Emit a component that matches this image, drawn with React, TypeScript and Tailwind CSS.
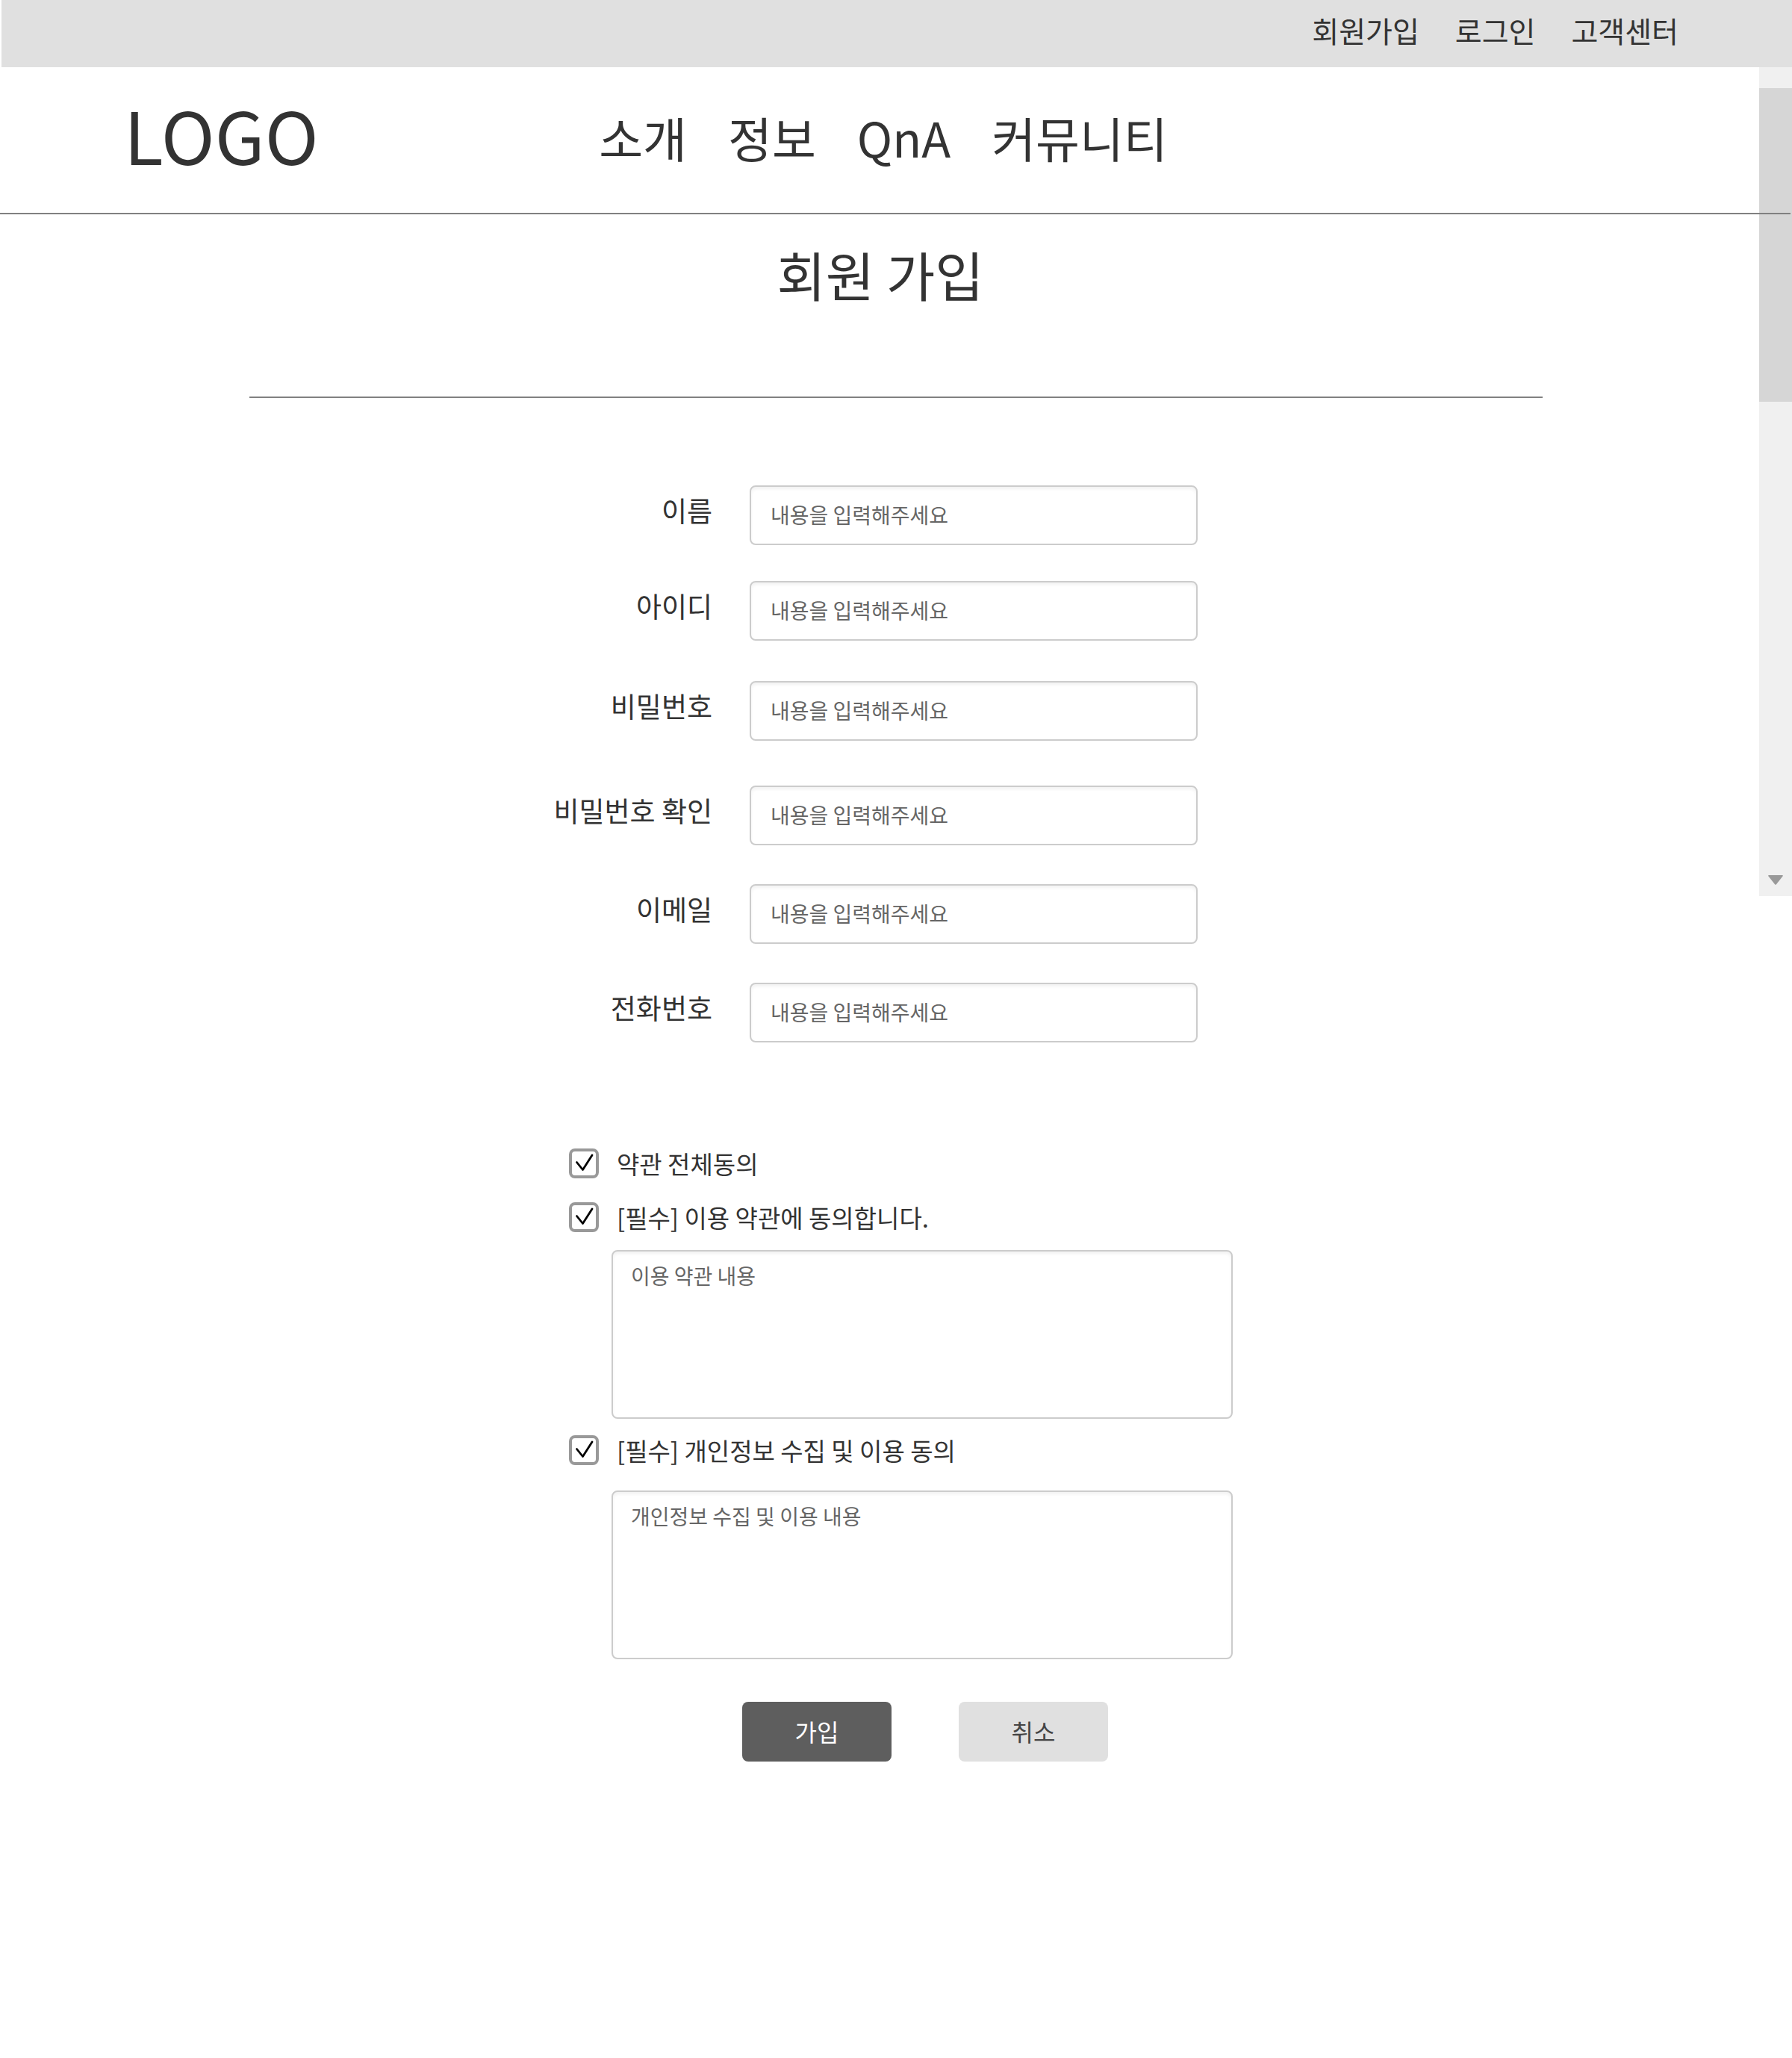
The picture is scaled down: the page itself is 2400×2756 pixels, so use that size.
import React from "react";

const topLinks = ["회원가입", "로그인", "고객센터"];
const navLinks = ["소개", "정보", "QnA", "커뮤니티"];

const fields = [
  { id: "name", label: "이름", type: "text", space: "" },
  { id: "user-id", label: "아이디", type: "text", space: "mt-12" },
  { id: "password", label: "비밀번호", type: "password", space: "mt-[54px]" },
  { id: "password-confirm", label: "비밀번호 확인", type: "password", space: "mt-[60px]" },
  { id: "email", label: "이메일", type: "email", space: "mt-[52px]" },
  { id: "phone", label: "전화번호", type: "tel", space: "mt-[52px]" },
];

const boxClass =
  "rounded-lg border-2 border-[#cccccc] bg-white text-[28px] leading-10 text-[#666666] shadow-[inset_0_3px_4px_#f2f2f2] outline-none placeholder:text-[#666666] placeholder:opacity-100";

function Field({ id, label, type, space }: { id: string; label: string; type: string; space: string }) {
  return (
    <div className={`flex items-center ${space}`}>
      <label htmlFor={id} className="w-[226px] shrink-0 pb-[14px] text-right text-[37px] leading-[52px] whitespace-nowrap">
        {label}
      </label>
      <input
        id={id}
        type={type}
        placeholder="내용을 입력해주세요"
        className={`ml-[50px] h-20 w-full max-w-[600px] px-[26px] pb-[3px] ${boxClass}`}
      />
    </div>
  );
}

function Check({ id, label }: { id: string; label: string }) {
  return (
    <div className="flex items-center gap-6 pl-[34px]">
      <span className="grid size-10 shrink-0">
        <input
          id={id}
          type="checkbox"
          defaultChecked
          className="peer col-start-1 row-start-1 size-10 appearance-none rounded-lg border-4 border-[#999999] bg-white"
        />
        <svg
          viewBox="0 0 40 40"
          fill="none"
          stroke="#000000"
          strokeWidth="2.8"
          strokeLinecap="round"
          strokeLinejoin="round"
          aria-hidden="true"
          className="pointer-events-none invisible col-start-1 row-start-1 size-10 peer-checked:visible"
        >
          <path d="M10.5 18.5 L18.5 28.5 L31 9" />
        </svg>
      </span>
      <label htmlFor={id} className="text-[33px] leading-10">
        {label}
      </label>
    </div>
  );
}

function Terms({ label, text }: { label: string; text: string }) {
  return (
    <div className="pl-[91px]">
      <textarea
        aria-label={label}
        readOnly
        defaultValue={text}
        className={`block h-[226px] w-full max-w-[832px] resize-none px-6 pt-3 ${boxClass}`}
      />
    </div>
  );
}

function Scrollbar() {
  return (
    <div className="absolute top-[90px] right-0 flex h-[1110px] w-11 flex-col bg-[#f0f0f0] pt-7" aria-hidden="true">
      <div className="h-[420px] bg-[#d6d6d6]" />
      <svg viewBox="0 0 20 14" className="mt-auto mb-[14px] h-[14px] w-5 self-center" fill="#999999">
        <path d="M1 0h18q1.4 0.4 0.5 1.6L11 12.2q-1 1.2-2 0L0.5 1.6Q-0.4 0.4 1 0z" />
      </svg>
    </div>
  );
}

export default function App() {
  return (
    <div className="relative min-h-screen bg-white font-['Noto_Sans_CJK_KR',sans-serif] text-[#333333]">
      <Scrollbar />

      <nav aria-label="회원 메뉴" className="ml-0.5 flex justify-end gap-12 bg-[#e0e0e0] pt-3 pr-[152px] pb-[22px] text-[39px] leading-[56px]">
        {topLinks.map((t) => (
          <a key={t} href="#">
            {t}
          </a>
        ))}
      </nav>

      <header className="relative mr-0.5 grid grid-cols-[1fr_auto_1fr] items-center border-b-2 border-[#808080] pt-[41px] pr-8 pb-[50px]">
        <a href="#" className="pb-2 pl-[166px] text-[97px] leading-[96px]">
          LOGO
        </a>
        <nav aria-label="주 메뉴" className="flex gap-[55px] text-[64px] leading-[96px]">
          {navLinks.map((t) => (
            <a key={t} href="#">
              {t}
            </a>
          ))}
        </nav>
      </header>

      <main className="pb-[396px]">
        <h1 className="pt-[43px] pr-[42px] pb-px text-center text-[71px] leading-[72px]">회원 가입</h1>
        <hr className="mx-auto mt-32 max-w-[1732px] border-0 border-t-2 border-[#808080]" />

        <form className="mx-auto mt-[117px] w-full max-w-[944px]" onSubmit={(e) => e.preventDefault()}>
          {fields.map((f) => (
            <Field key={f.id} {...f} />
          ))}

          <div className="mt-[142px] flex flex-col">
            <Check id="agree-all" label="약관 전체동의" />
            <div className="mt-8">
              <Check id="agree-terms" label="[필수] 이용 약관에 동의합니다." />
            </div>
            <div className="mt-6">
              <Terms label="이용 약관" text="이용 약관 내용" />
            </div>
            <div className="mt-[22px]">
              <Check id="agree-privacy" label="[필수] 개인정보 수집 및 이용 동의" />
            </div>
            <div className="mt-[34px]">
              <Terms label="개인정보 수집 및 이용" text="개인정보 수집 및 이용 내용" />
            </div>
          </div>

          <div className="mt-[57px] flex gap-[90px] pl-[266px] text-[32px] leading-10">
            <button type="submit" className="h-20 w-[200px] rounded-lg bg-[#5e5e5e] pb-0.5 text-white">
              가입
            </button>
            <button type="button" className="h-20 w-[200px] rounded-lg bg-[#e0e0e0] pb-0.5 text-[#444444]">
              취소
            </button>
          </div>
        </form>
      </main>
    </div>
  );
}
